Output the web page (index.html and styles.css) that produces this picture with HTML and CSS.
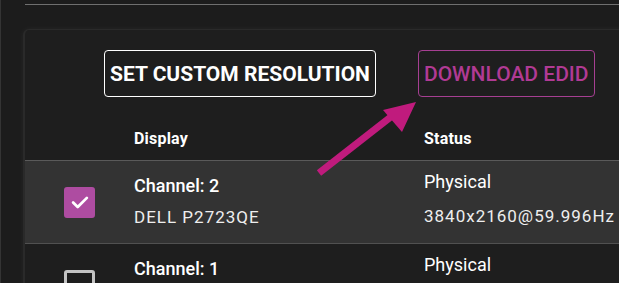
FILE: index.html
```html
<!DOCTYPE html>
<html lang="en">
  <head>
    <meta charset="UTF-8" />
    <meta name="viewport" content="width=device-width, initial-scale=1.0" />
    <title>Displays</title>
    <link rel="stylesheet" href="styles.css">
  </head>
  <body>
    <hr class="topline" />
    <section class="card">
      <div class="actions">
        <button class="btn">Set custom resolution</button>
        <button class="btn accent">Download EDID</button>
      </div>
      <div class="table">
        <div class="row head">
          <span></span>
          <span>Display</span>
          <span>Status</span>
        </div>
        <div class="row selected">
          <span class="check on">
            <svg viewBox="0 0 24 24" width="22" height="22"><path d="M4.5 12.5l5 5 10-10" fill="none" stroke="#fff" stroke-width="3" stroke-linecap="round" stroke-linejoin="round"/></svg>
          </span>
          <div class="cell">
            <h4>Channel: 2</h4>
            <p>DELL P2723QE</p>
          </div>
          <div class="cell status">
            <h5>Physical</h5>
            <p>3840x2160@59.996Hz</p>
          </div>
        </div>
        <div class="row">
          <span class="check"></span>
          <div class="cell">
            <h4>Channel: 1</h4>
            <p>DELL P2723QE</p>
          </div>
          <div class="cell status">
            <h5>Physical</h5>
            <p>3840x2160@59.996Hz</p>
          </div>
        </div>
      </div>
      <svg class="arrow" viewBox="0 0 120 100" width="120" height="100">
        <line x1="14" y1="92" x2="87" y2="35" stroke="#c01b7d" stroke-width="7" />
        <polygon points="111,21 78,29 97,51" fill="#c01b7d" />
      </svg>
    </section>
  </body>
</html>
```

FILE: styles.css
```css
body {
  margin: 0;
  height: 100vh;
  overflow: hidden;
  background: #1c1c1c;
  border-left: 1px solid #343434;
  font-family: Roboto, "Liberation Sans", sans-serif;
  color: #fff;
}
.topline {
  border: 0;
  height: 1px;
  background: #6f6f6f;
  margin: 4px 0 0 24px;
}
.card {
  position: relative;
  margin: 24px 0 0 22px;
  width: 700px;
  height: 400px;
  background: #1e1e1e;
  border-top: 1px solid #2a2a2a;
  border-left: 2px solid #2a2a2a;
  border-radius: 6px 0 0 0;
  box-shadow: 0 0 6px rgba(255, 255, 255, 0.05);
}
.actions {
  display: flex;
  gap: 42px;
  padding: 20px 0 0 79px;
}
.btn {
  height: 47px;
  padding: 0 5px;
  background: transparent;
  border: 1px solid #fff;
  border-radius: 4px;
  color: #fff;
  font-family: inherit;
  font-size: 21px;
  font-weight: 700;
  text-transform: uppercase;
  &.accent {
    border-color: #a63f92;
    color: #b13a94;
    font-weight: 500;
    padding: 0 5px;
  }
}
.table {
  margin-top: 20px;
}
.row {
  display: grid;
  grid-template-columns: 109px 290px 1fr;
  align-items: center;
  height: 82px;
  border-bottom: 1px solid #515151;
  &.head {
    height: 42px;
    border-bottom-color: #5a5a5a;
    font-size: 16px;
    font-weight: 700;
    letter-spacing: 0.2px;
    padding-bottom: 1px;
  }
  &.selected {
    background: #333;
  }
}
.cell {
  h4,
  h5,
  p {
    margin: 0;
  }
  h4 {
    font-size: 18px;
    font-weight: 500;
    margin-top: -2px;
  }
  h5 {
    font-size: 18px;
    font-weight: 400;
    margin-top: -8px;
  }
  p {
    font-size: 17px;
    letter-spacing: 1px;
    margin-top: 11px;
    color: #eee;
  }
  &.status p {
    margin-top: 14px;
  }
}
.check {
  justify-self: center;
  width: 31px;
  height: 31px;
  box-sizing: border-box;
  border: 3px solid #c4c4c4;
  border-radius: 3px;
  display: flex;
  align-items: center;
  justify-content: center;
  &.on {
    background: #ae4ca1;
    border-color: #ae4ca1;
  }
}
.arrow {
  position: absolute;
  left: 280px;
  top: 51px;
}
```
